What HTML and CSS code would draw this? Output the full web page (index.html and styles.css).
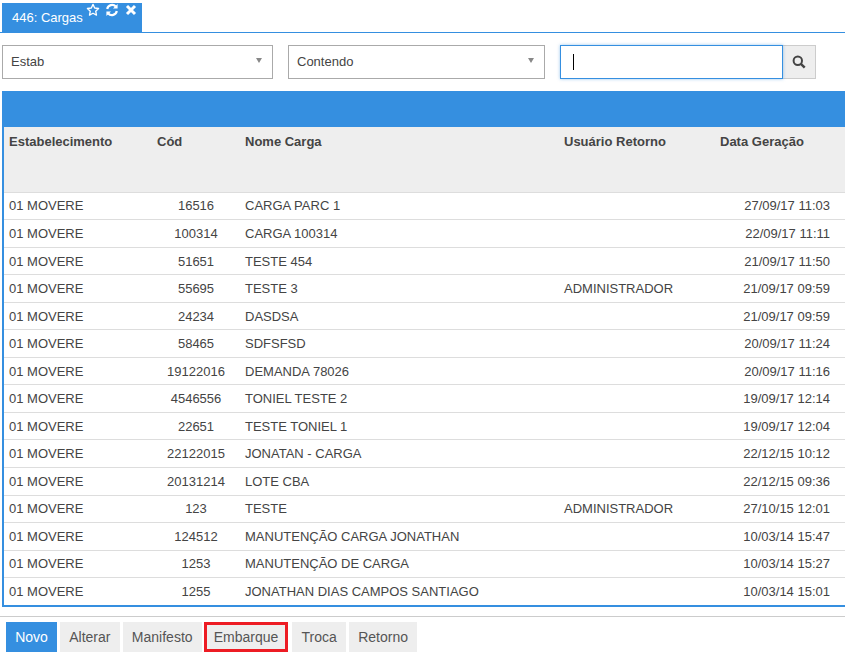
FILE: index.html
```html
<!DOCTYPE html>
<html lang="pt">
<head>
<meta charset="utf-8">
<title>446: Cargas</title>
<link rel="stylesheet" href="styles.css">
</head>
<body>
<div class="tabbar">
  <div class="tab">
    <span class="tab-label">446: Cargas</span>
    <span class="tab-icons">
      <svg class="ti" viewBox="0 0 14 14" width="14" height="14"><path d="M7 1.4l1.7 3.6 3.9.5-2.9 2.7.8 3.9L7 10.2l-3.5 1.9.8-3.9L1.4 5.5l3.9-.5z" fill="none" stroke="#fff" stroke-width="1.3" stroke-linejoin="round"/></svg>
      <svg class="ti" viewBox="0 0 14 14" width="14" height="14"><path d="M2.2 6A5 5 0 0 1 10.8 3.6M11.8 8A5 5 0 0 1 3.2 10.4" fill="none" stroke="#fff" stroke-width="2.2"/><path d="M12.6 1v4.6H8zM1.4 13V8.4H6z" fill="#fff"/></svg>
      <svg class="ti" viewBox="0 0 14 14" width="14" height="14"><path d="M3 3l8 8M11 3l-8 8" stroke="#fff" stroke-width="3" fill="none"/></svg>
    </span>
  </div>
</div>
<div class="filters">
  <div class="select s1"><span>Estab</span><i class="caret"></i></div>
  <div class="select s2"><span>Contendo</span><i class="caret"></i></div>
  <div class="search">
    <div class="input"><b class="cursor"></b></div>
    <div class="search-btn">
      <svg viewBox="0 0 14 14" width="14" height="14"><circle cx="5.8" cy="5.8" r="4.2" fill="none" stroke="#444" stroke-width="2"/><path d="M8.9 8.9l3.8 3.8" stroke="#444" stroke-width="2.4"/></svg>
    </div>
  </div>
</div>
<div class="panel">
  <div class="panel-bar"></div>
  <div class="row head">
    <div class="c1">Estabelecimento</div><div class="c2">Cód</div><div class="c3">Nome Carga</div><div class="c4">Usuário Retorno</div><div class="c5">Data Geração</div>
  </div>
  <div class="row"><div class="c1">01 MOVERE</div><div class="c2">16516</div><div class="c3">CARGA PARC 1</div><div class="c4"></div><div class="c5">27/09/17 11:03</div></div>
  <div class="row"><div class="c1">01 MOVERE</div><div class="c2">100314</div><div class="c3">CARGA 100314</div><div class="c4"></div><div class="c5">22/09/17 11:11</div></div>
  <div class="row"><div class="c1">01 MOVERE</div><div class="c2">51651</div><div class="c3">TESTE 454</div><div class="c4"></div><div class="c5">21/09/17 11:50</div></div>
  <div class="row"><div class="c1">01 MOVERE</div><div class="c2">55695</div><div class="c3">TESTE 3</div><div class="c4">ADMINISTRADOR</div><div class="c5">21/09/17 09:59</div></div>
  <div class="row"><div class="c1">01 MOVERE</div><div class="c2">24234</div><div class="c3">DASDSA</div><div class="c4"></div><div class="c5">21/09/17 09:59</div></div>
  <div class="row"><div class="c1">01 MOVERE</div><div class="c2">58465</div><div class="c3">SDFSFSD</div><div class="c4"></div><div class="c5">20/09/17 11:24</div></div>
  <div class="row"><div class="c1">01 MOVERE</div><div class="c2">19122016</div><div class="c3">DEMANDA 78026</div><div class="c4"></div><div class="c5">20/09/17 11:16</div></div>
  <div class="row"><div class="c1">01 MOVERE</div><div class="c2">4546556</div><div class="c3">TONIEL TESTE 2</div><div class="c4"></div><div class="c5">19/09/17 12:14</div></div>
  <div class="row"><div class="c1">01 MOVERE</div><div class="c2">22651</div><div class="c3">TESTE TONIEL 1</div><div class="c4"></div><div class="c5">19/09/17 12:04</div></div>
  <div class="row"><div class="c1">01 MOVERE</div><div class="c2">22122015</div><div class="c3">JONATAN - CARGA</div><div class="c4"></div><div class="c5">22/12/15 10:12</div></div>
  <div class="row"><div class="c1">01 MOVERE</div><div class="c2">20131214</div><div class="c3">LOTE CBA</div><div class="c4"></div><div class="c5">22/12/15 09:36</div></div>
  <div class="row"><div class="c1">01 MOVERE</div><div class="c2">123</div><div class="c3">TESTE</div><div class="c4">ADMINISTRADOR</div><div class="c5">27/10/15 12:01</div></div>
  <div class="row"><div class="c1">01 MOVERE</div><div class="c2">124512</div><div class="c3">MANUTENÇÃO CARGA JONATHAN</div><div class="c4"></div><div class="c5">10/03/14 15:47</div></div>
  <div class="row"><div class="c1">01 MOVERE</div><div class="c2">1253</div><div class="c3">MANUTENÇÃO DE CARGA</div><div class="c4"></div><div class="c5">10/03/14 15:27</div></div>
  <div class="row last"><div class="c1">01 MOVERE</div><div class="c2">1255</div><div class="c3">JONATHAN DIAS CAMPOS SANTIAGO</div><div class="c4"></div><div class="c5">10/03/14 15:01</div></div>
</div>
<div class="actions">
  <button class="btn primary">Novo</button>
  <button class="btn">Alterar</button>
  <button class="btn tight">Manifesto</button>
  <button class="btn marked">Embarque</button>
  <button class="btn">Troca</button>
  <button class="btn">Retorno</button>
</div>
</body>
</html>
```
FILE: styles.css
```css
* { box-sizing: border-box; }
html, body { margin: 0; padding: 0; }
body {
  width: 850px;
  height: 658px;
  overflow: hidden;
  background: #fff;
  color: #444;
  font: 13px "Liberation Sans", Arial, sans-serif;
}
.tabbar {
  width: 845px;
  height: 33px;
  padding: 3px 0 0 2px;
  border-bottom: 1px solid #358fe0;
}
.tab {
  width: 140px;
  height: 29px;
  background: #358fe0;
  color: #fff;
  display: flex;
  padding-left: 10px;
  white-space: nowrap;
}
.tab-label { line-height: 29px; }
.tab-icons { display: flex; gap: 5px; margin-left: 3px; height: 14px; }
.ti { display: block; }
.filters {
  display: flex;
  height: 34px;
  margin: 12px 0 0 2px;
}
.select {
  height: 34px;
  border: 1px solid #aaa;
  background: #fff;
  display: flex;
  align-items: center;
  justify-content: space-between;
  padding: 0 8px;
  line-height: 30px;
}
.s1 { width: 271px; margin-right: 15px; }
.s2 { width: 257px; margin-right: 15px; }
.caret {
  width: 0;
  height: 0;
  border: 3.5px solid transparent;
  border-top: 5px solid #888;
  border-bottom: 0;
  margin: 0 2px 3px 0;
}
.search { display: flex; }
.input {
  width: 223px;
  height: 34px;
  border: 1px solid #358fe0;
  box-shadow: 0 0 3px rgba(53, 143, 224, .5);
  display: flex;
  align-items: center;
  padding-left: 12px;
  background: #fff;
  position: relative;
}
.cursor { display: block; width: 1px; height: 16px; background: #000; }
.search-btn {
  width: 33px;
  height: 34px;
  background: #eee;
  border: 1px solid #ccc;
  border-left: 0;
  display: flex;
  align-items: center;
  justify-content: center;
}
.panel {
  width: 843px;
  height: 516px;
  margin: 12px 0 0 2px;
  border-left: 2px solid #358fe0;
  border-bottom: 2px solid #358fe0;
}
.panel-bar { height: 36px; margin-left: -2px; background: #358fe0; }
.row {
  display: grid;
  grid-template-columns: 146px 92px 319px 156px 128px;
  height: 27.54px;
  align-items: center;
  border-bottom: 1px solid #ddd;
  white-space: nowrap;
}
.row.last { border-bottom: 0; }
.row.head {
  height: 65.7px;
  align-items: start;
  padding-top: 7px;
  background: #eee;
  font-weight: bold;
}
.c1 { padding-left: 5px; }
.c2 { text-align: center; }
.c3 { padding-left: 3px; }
.c4 { padding-left: 3px; }
.c5 { padding-right: 15px; text-align: right; }
.head .c2 { text-align: left; padding-left: 7px; }
.head .c5 { text-align: left; padding: 0 0 0 3px; }
.actions {
  width: 845px;
  margin-top: 9px;
  border-top: 1px solid #ccc;
  padding: 5px 0 0 6px;
  display: flex;
  gap: 3px;
}
.btn {
  height: 30px;
  padding: 0 9.2px;
  border: 0;
  background: #eee;
  color: #555;
  font: 14px "Liberation Sans", Arial, sans-serif;
}
.btn.primary { background: #358fe0; color: #fff; }
.btn.tight { margin-right: -1px; }
.btn.marked { padding: 0 10px; margin-right: 1px; outline: 3px solid #ed1c24; outline-offset: -3px; }
```
